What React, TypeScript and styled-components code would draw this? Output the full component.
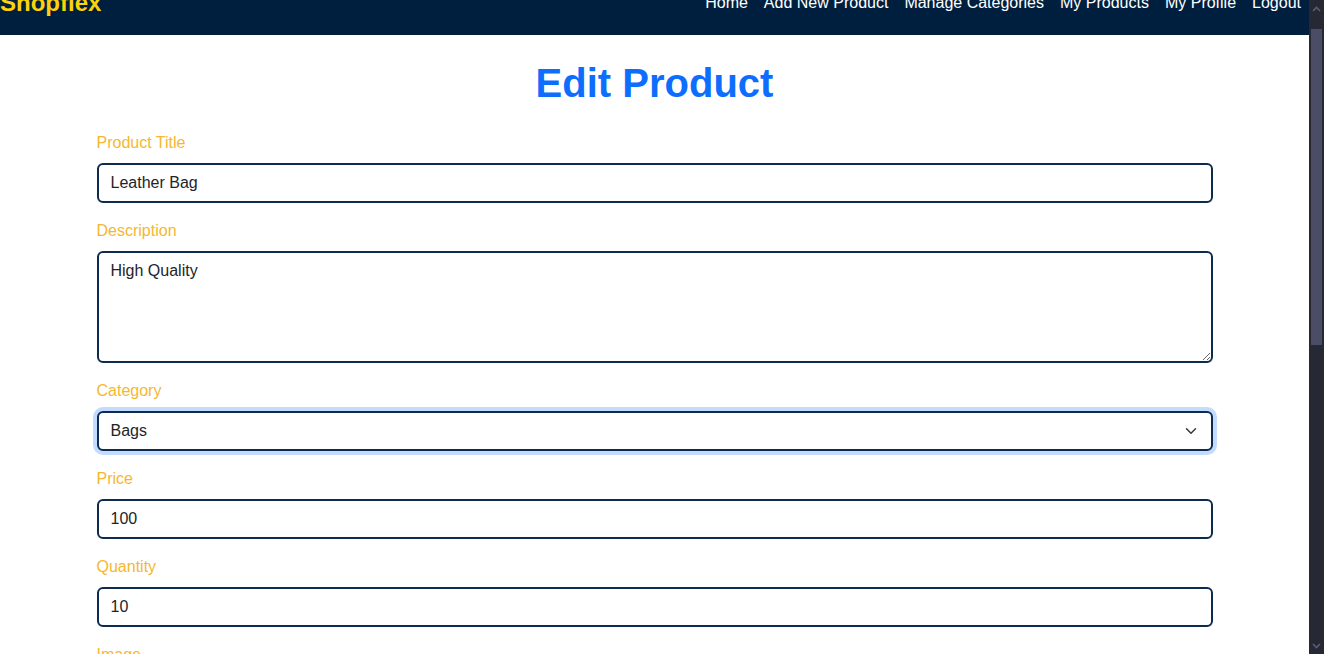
import React, { useLayoutEffect, useRef } from "react";
import styled, { createGlobalStyle } from "styled-components";

const GlobalStyle = createGlobalStyle`
  html, body { margin: 0; padding: 0; background: #ffffff; overflow: hidden; }
  body {
    font-family: "Liberation Sans", Arial, sans-serif;
    color: #212529;
  }
  *, *::before, *::after { box-sizing: border-box; }
`;

const Shell = styled.div`
  display: flex;
  height: 100vh;
`;

const Viewport = styled.div`
  flex: 1;
  min-width: 0;
  overflow-y: auto;
  scrollbar-width: none;
  &::-webkit-scrollbar { display: none; }
`;

const ScrollTrack = styled.div`
  width: 15px;
  flex: none;
  background: #262833;
  display: flex;
  flex-direction: column;
`;

const ArrowButton = styled.div`
  height: 17px;
  display: flex;
  align-items: center;
  justify-content: center;
`;

const ThumbArea = styled.div`
  flex: 1;
  padding: 12px 2px 0;
`;

const Thumb = styled.div`
  height: 316px;
  background: #4a4d65;
`;

const Page = styled.div`
  min-height: 1287px;
  background: #ffffff;
`;

const Nav = styled.nav`
  height: 59px;
  background: #001f3f;
  display: flex;
  align-items: center;
  justify-content: space-between;
  padding: 0 8px 5px 0;
`;

const Brand = styled.a`
  color: #fcd20a;
  font-size: 24px;
  font-weight: 700;
  text-decoration: none;
`;

const NavList = styled.ul`
  display: flex;
  gap: 16px;
  list-style: none;
  margin: 0;
  padding: 0;
`;

const NavLink = styled.a`
  color: #ffffff;
  font-size: 16px;
  text-decoration: none;
`;

const Container = styled.main`
  max-width: 1140px;
  margin: 0 auto;
  padding: 0 12px 40px;
`;

const Title = styled.h1`
  margin: 24px 0;
  font-size: 40px;
  line-height: 1.2;
  font-weight: 700;
  text-align: center;
  color: #0d6efd;
`;

const Field = styled.div`
  margin-bottom: 16px;
`;

const Label = styled.label`
  display: block;
  margin-bottom: 8px;
  font-size: 16px;
  line-height: 1.5;
  color: #f5b731;
`;

const controlBase = `
  display: block;
  width: 100%;
  padding: 6px 12px;
  font-family: "Liberation Sans", Arial, sans-serif;
  font-size: 16px;
  line-height: 1.5;
  color: #212529;
  background: #ffffff;
  border: 2px solid #0d2b4e;
  border-radius: 6px;
  outline: none;
`;

const Input = styled.input`
  ${controlBase}
`;

const TextArea = styled.textarea`
  ${controlBase}
`;

const SelectWrap = styled.div`
  position: relative;
`;

const Select = styled.select<{ $focused?: boolean }>`
  ${controlBase}
  appearance: none;
  -webkit-appearance: none;
  padding-right: 36px;
  box-shadow: ${(p) => (p.$focused ? "0 0 0 4px rgba(13, 110, 253, 0.25)" : "none")};
`;

const Chevron = styled.svg`
  position: absolute;
  right: 14px;
  top: 50%;
  width: 16px;
  height: 12px;
  margin-top: -6px;
  pointer-events: none;
`;

const SubmitButton = styled.button`
  padding: 6px 12px;
  font-family: "Liberation Sans", Arial, sans-serif;
  font-size: 16px;
  line-height: 1.5;
  color: #ffffff;
  background: #0d6efd;
  border: 1px solid #0d6efd;
  border-radius: 6px;
`;

const links = ["Home", "Add New Product", "Manage Categories", "My Products", "My Profile", "Logout"];

export default function App() {
  const viewRef = useRef<HTMLDivElement>(null);

  useLayoutEffect(() => {
    const set = () => {
      if (viewRef.current) viewRef.current.scrollTop = 24;
    };
    set();
    const t = setTimeout(set, 50);
    return () => clearTimeout(t);
  }, []);

  return (
    <Shell>
      <GlobalStyle />
      <Viewport ref={viewRef}>
        <Page>
          <Nav>
            <Brand href="#">Shopflex</Brand>
            <NavList>
              {links.map((l) => (
                <li key={l}>
                  <NavLink href="#">{l}</NavLink>
                </li>
              ))}
            </NavList>
          </Nav>
          <Container>
            <Title>Edit Product</Title>
            <form onSubmit={(e) => e.preventDefault()}>
              <Field>
                <Label htmlFor="title">Product Title</Label>
                <Input id="title" type="text" defaultValue="Leather Bag" />
              </Field>
              <Field>
                <Label htmlFor="desc">Description</Label>
                <TextArea id="desc" rows={4} defaultValue="High Quality" />
              </Field>
              <Field>
                <Label htmlFor="cat">Category</Label>
                <SelectWrap>
                  <Select id="cat" defaultValue="Bags" $focused>
                    <option>Bags</option>
                    <option>Shoes</option>
                    <option>Accessories</option>
                  </Select>
                  <Chevron viewBox="0 0 16 16" fill="none">
                    <path d="m2 5 6 6 6-6" stroke="#343a40" strokeWidth="2" strokeLinecap="round" strokeLinejoin="round" />
                  </Chevron>
                </SelectWrap>
              </Field>
              <Field>
                <Label htmlFor="price">Price</Label>
                <Input id="price" type="text" defaultValue="100" />
              </Field>
              <Field>
                <Label htmlFor="qty">Quantity</Label>
                <Input id="qty" type="text" defaultValue="10" />
              </Field>
              <Field>
                <Label htmlFor="img">Image</Label>
                <Input id="img" type="file" />
              </Field>
              <SubmitButton type="submit">Update Product</SubmitButton>
            </form>
          </Container>
        </Page>
      </Viewport>
      <ScrollTrack aria-hidden="true">
        <ArrowButton>
          <svg width="9" height="6" viewBox="0 0 9 6">
            <path d="M1 5 4.5 1.5 8 5" fill="none" stroke="#5b5e72" strokeWidth="1.6" />
          </svg>
        </ArrowButton>
        <ThumbArea>
          <Thumb />
        </ThumbArea>
        <ArrowButton>
          <svg width="9" height="6" viewBox="0 0 9 6">
            <path d="M1 1 4.5 4.5 8 1" fill="none" stroke="#5b5e72" strokeWidth="1.6" />
          </svg>
        </ArrowButton>
      </ScrollTrack>
    </Shell>
  );
}
